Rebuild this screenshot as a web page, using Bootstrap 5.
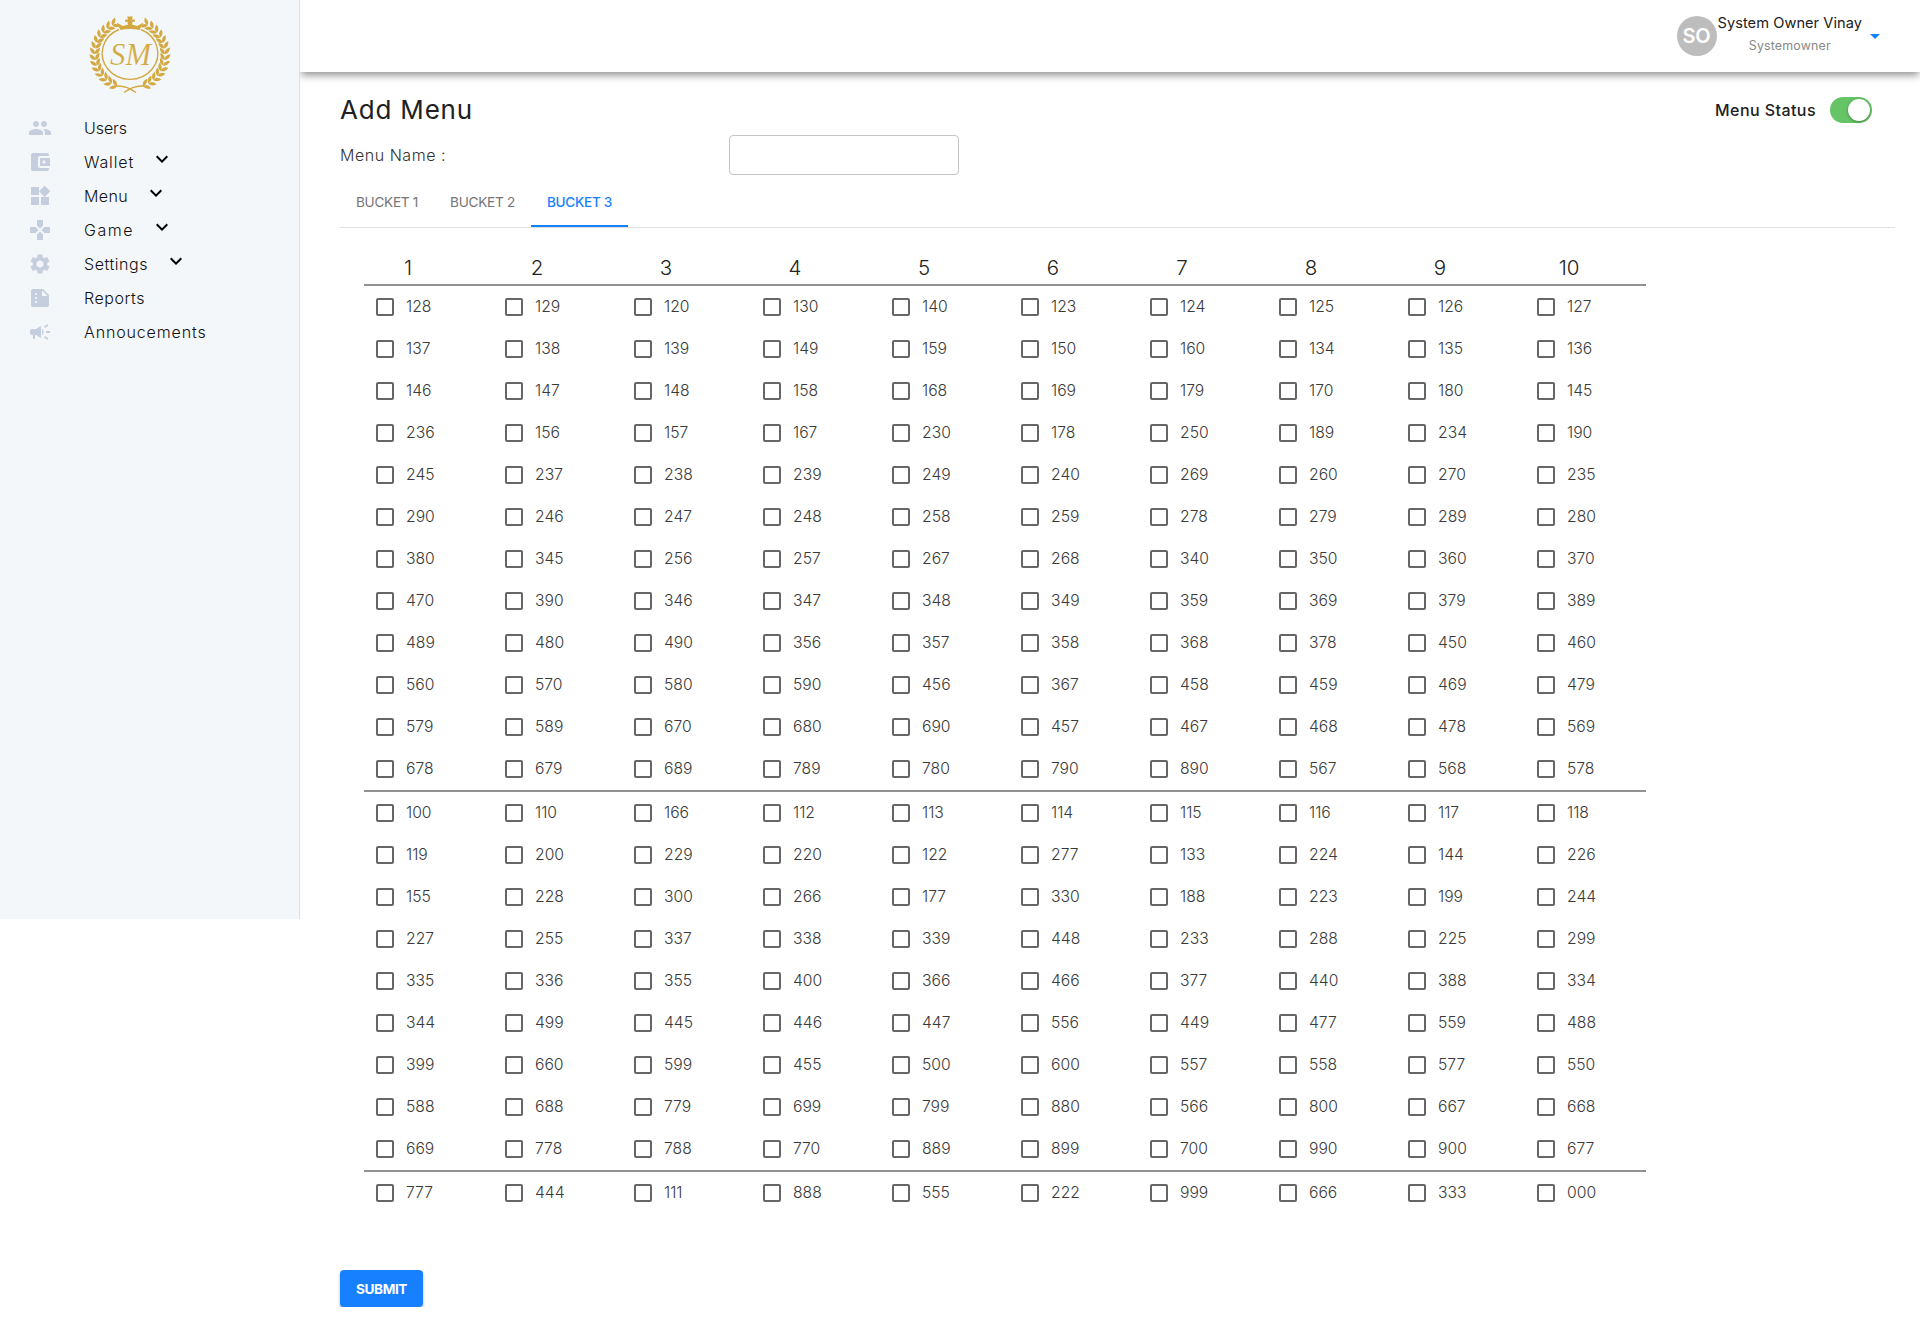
<!DOCTYPE html>
<html lang="en">
<head>
<meta charset="utf-8">
<meta name="viewport" content="width=device-width, initial-scale=1">
<title>Add Menu</title>
<link href="https://cdn.jsdelivr.net/npm/bootstrap@5.3.0/dist/css/bootstrap.min.css" rel="stylesheet">
<style>
body{font-family:Inter,"Open Sans",sans-serif;font-weight:300;font-size:16px;line-height:24px;color:#212121;background:#fff;overflow:hidden}
.side-panel{width:300px;height:919px;background:#f3f7fa;border-right:1px solid #dcdfe2}
.brand-mark{display:block;margin:11px 0 0 85px}
.side-nav{padding-top:10px}
.side-link{height:34px;padding-left:28px;color:#111}
.side-link .glyph{fill:#c5cedd;margin-right:32px}
.side-link .chev{margin-left:16px;margin-top:-7px;fill:#000}
.side-link span{font-size:16px}
.top-bar{height:72px;box-shadow:0 4px 8px -1px rgba(0,0,0,.45);padding-right:40px}
.avatar-disc{width:40px;height:40px;background:#bdbdbd;color:#fff;font-size:20px;font-weight:600;margin-right:1px}
.user-block{margin-top:-4px}
.user-name{font-size:14.6px;line-height:21px;font-weight:400}
.user-role{font-size:12.400px;line-height:18px;color:#888;font-weight:400;margin-top:3px}
.caret{border:5px solid transparent;border-top-color:#1780ff;border-bottom:0;margin-left:8px;margin-top:1px}
.page-body{padding:20px 25px 0 40px}
.page-title{font-size:26px;font-weight:400;line-height:36px}
.status-text{font-size:16px;font-weight:500}
.toggle{width:42px;height:26px;border-radius:13px;background:#65c466;padding:2px;margin:0 23px 0 14px}
.toggle i{width:22px;height:22px;box-shadow:0 1px 3px rgba(0,0,0,.35)}
.name-row{height:40px;margin-top:7px}
.name-label{width:389px;font-size:16px;color:#333}
.name-field{width:230px;height:40px;border:1px solid #c4c4c4;border-radius:4px}
.bucket-tabs{margin-top:4px;height:49px;border-bottom:1px solid #e0e0e0}
.bucket-tab{height:48px;padding:0 16px;font-size:13.6px;font-weight:400;color:#757575;border-bottom:2px solid transparent}
.bucket-tab.on{color:#1780ff;border-color:#1780ff;font-weight:500}
.picks{margin:26px 0 0 24px;width:1282px}
.picks-row.ruled{border-bottom:2px solid #919191}
.pick{width:129px;height:42px;flex:none;padding-left:12px;color:#3a3a3a;font-size:15.7px}
.pick .box{width:18px;height:18px;border:2px solid #666;border-radius:2px;margin-right:12px}
.head{height:30px;padding-top:2px;width:129px;flex:none;padding-right:41px;font-size:20.5px;color:#222}
.submit-btn{width:83px;height:37px;margin-top:56px;background:#1780ff;border-radius:4px;color:#fff;font-size:13.6px;font-weight:700;box-shadow:0 2px 3px rgba(0,0,0,.3)}
</style>
<script src="https://cdn.jsdelivr.net/npm/bootstrap@5.3.0/dist/js/bootstrap.bundle.min.js"></script>
</head>
<body>
<div class="d-flex align-items-start">
<aside class="side-panel flex-shrink-0 position-relative z-1">
<svg class="brand-mark" width="90" height="90" viewBox="85 11 90 90" fill="#d3a941">
<g id="laurel"></g>
<path d="M119 29.5A27.8 26 0 1 0 141 29.5" fill="none" stroke="#d3a941" stroke-width="1.4"/>
<path d="M120.500 30l-4-7.500 6.500 3.500 5-1.500-.5-2.700-2.300.2v-2.500h2.800l-.8-3h5.600l-.8 3h2.800v2.500l-2.300-.2-.5 2.700 5 1.500 6.500-3.500-4 7.500c-6-1.500-13-1.500-19 0z"/>
<text x="110" y="64.500" font-family="Liberation Serif,serif" font-style="italic" font-size="31" textLength="41" lengthAdjust="spacingAndGlyphs" stroke="#f3f7fa" stroke-width=".2">SM</text>
</svg>
<nav class="side-nav d-flex flex-column" id="nav"></nav>
</aside>
<div class="flex-grow-1">
<header class="top-bar d-flex align-items-center justify-content-end">
<div class="avatar-disc rounded-circle d-flex align-items-center justify-content-center"><span data-w="28">SO</span></div>
<div class="user-block text-center"><div class="user-name"><span data-w="144.500">System Owner Vinay</span></div><div class="user-role"><span data-w="82">Systemowner</span></div></div>
<i class="caret"></i>
</header>
<main class="page-body">
<div class="d-flex align-items-center justify-content-between"><h1 class="page-title m-0"><span data-w="133">Add Menu</span></h1>
<div class="d-flex align-items-center"><span class="status-text" data-w="101">Menu Status</span><div class="toggle d-flex justify-content-end"><i class="rounded-circle bg-white"></i></div></div></div>
<div class="name-row d-flex align-items-center"><label class="name-label" for="mname"><span data-w="106">Menu Name :</span></label><input id="mname" class="name-field"></div>
<div class="bucket-tabs d-flex"><div class="bucket-tab d-flex align-items-center"><span data-w="62">BUCKET 1</span></div><div class="bucket-tab d-flex align-items-center"><span data-w="65">BUCKET 2</span></div><div class="bucket-tab on d-flex align-items-center"><span data-w="65">BUCKET 3</span></div></div>
<div class="picks" id="picks"></div>
<button class="submit-btn border-0 p-0"><span data-w="51">SUBMIT</span></button>
</main>
</div>
</div>
<script>
const chev='<svg class="chev" width="24" height="24" viewBox="0 0 24 24"><path d="M7.410 8.590L12 13.170l4.590-4.580L18 10l-6 6-6-6z"/></svg>';
const dot=y=>`M8 ${y}c-.55 0-1-.45-1-1s.45-1 1-1 1 .45 1 1-.45 1-1 1z`;
const links=[
['Users',0,43,'M16 11c1.660 0 2.990-1.340 2.990-3S17.660 5 16 5s-3 1.340-3 3 1.340 3 3 3zm-8 0c1.660 0 2.990-1.340 2.990-3S9.660 5 8 5 5 6.340 5 8s1.340 3 3 3zm0 2c-2.330 0-7 1.170-7 3.500V19h14v-2.500c0-2.330-4.670-3.500-7-3.500zm8 0c-.29 0-.62.020-.97.050 1.160.84 1.970 1.970 1.970 3.450V19h6v-2.500c0-2.330-4.670-3.500-7-3.500z'],
['Wallet',1,50,'M21 18v1c0 1.100-.9 2-2 2H5c-1.110 0-2-.9-2-2V5c0-1.100.89-2 2-2h14c1.100 0 2 .9 2 2v1h-9c-1.110 0-2 .9-2 2v8c0 1.100.89 2 2 2h9zm-9-2h10V8H12v8zm4-2.500c-.83 0-1.500-.67-1.500-1.500s.67-1.500 1.500-1.500 1.500.67 1.500 1.500-.67 1.500-1.500 1.500z'],
['Menu',1,44,'M13 13v8h8v-8h-8zM3 21h8v-8H3v8zM3 3v8h8V3H3zm13.660-1.310L11 7.340 16.660 13l5.660-5.660-5.660-5.650z'],
['Game',1,50,'M15 7.500V2H9v5.500l3 3 3-3zM7.500 9H2v6h5.500l3-3-3-3zM9 16.500V22h6v-5.500l-3-3-3 3zM16.500 9l-3 3 3 3H22V9h-5.500z'],
['Settings',1,64,'M19.140 12.940c.04-.3.060-.61.060-.94 0-.32-.02-.64-.07-.94l2.030-1.580c.18-.14.230-.41.120-.61l-1.920-3.320c-.12-.22-.37-.29-.59-.22l-2.390.96c-.5-.38-1.030-.7-1.620-.94l-.36-2.540c-.04-.24-.24-.41-.48-.41h-3.840c-.24 0-.43.170-.47.410l-.36 2.540c-.59.240-1.130.57-1.620.94l-2.390-.96c-.22-.08-.47 0-.59.220L2.740 8.870c-.12.210-.08.470.12.610l2.030 1.580c-.05.3-.09.630-.09.940s.02.640.070.940l-2.030 1.580c-.18.140-.23.410-.12.610l1.920 3.320c.12.220.37.290.59.220l2.390-.96c.5.380 1.030.7 1.620.94l.36 2.540c.05.240.24.410.48.410h3.840c.24 0 .44-.17.470-.41l.36-2.540c.59-.24 1.130-.56 1.620-.94l2.390.96c.22.080.47 0 .59-.22l1.920-3.320c.12-.22.070-.47-.12-.61l-2.010-1.580zM12 15.600c-1.980 0-3.600-1.620-3.600-3.600s1.620-3.600 3.600-3.600 3.600 1.620 3.600 3.600-1.620 3.600-3.600 3.600z'],
['Reports',0,61,'M15 3H5c-1.100 0-1.990.9-1.990 2L3 19c0 1.100.89 2 1.990 2H19c1.100 0 2-.9 2-2V9l-6-6z'+dot(17)+dot(13)+dot(9)+'M14 10V4.500l5.500 5.500H14z'],
['Annoucements',0,122.5,'M18 11v2h4v-2h-4zm-2 6.610c.96.71 2.210 1.650 3.200 2.390.4-.53.8-1.070 1.200-1.600-.99-.74-2.240-1.680-3.200-2.400-.4.540-.8 1.080-1.200 1.610zM20.400 5.600c-.4-.53-.8-1.070-1.200-1.600-.99.740-2.240 1.680-3.200 2.400.4.530.8 1.070 1.200 1.600.96-.72 2.210-1.650 3.200-2.400zM4 9c-1.100 0-2 .9-2 2v2c0 1.100.9 2 2 2h1v4h2v-4h1l5 3V6L8 9H4zm11.500 3c0-1.330-.58-2.530-1.500-3.350v6.690c.92-.81 1.500-2.010 1.500-3.340z']];
document.getElementById('nav').innerHTML=links.map(([t,c,w,d])=>`<div class="side-link d-flex align-items-center"><svg class="glyph" width="24" height="24" viewBox="0 0 24 24" fill-rule="evenodd"><path d="${d}"/></svg><span data-w="${w}">${t}</span>${c?chev:''}</div>`).join('');

const rows=`128 129 120 130 140 123 124 125 126 127
137 138 139 149 159 150 160 134 135 136
146 147 148 158 168 169 179 170 180 145
236 156 157 167 230 178 250 189 234 190
245 237 238 239 249 240 269 260 270 235
290 246 247 248 258 259 278 279 289 280
380 345 256 257 267 268 340 350 360 370
470 390 346 347 348 349 359 369 379 389
489 480 490 356 357 358 368 378 450 460
560 570 580 590 456 367 458 459 469 479
579 589 670 680 690 457 467 468 478 569
678 679 689 789 780 790 890 567 568 578
100 110 166 112 113 114 115 116 117 118
119 200 229 220 122 277 133 224 144 226
155 228 300 266 177 330 188 223 199 244
227 255 337 338 339 448 233 288 225 299
335 336 355 400 366 466 377 440 388 334
344 499 445 446 447 556 449 477 559 488
399 660 599 455 500 600 557 558 577 550
588 688 779 699 799 880 566 800 667 668
669 778 788 770 889 899 700 990 900 677
777 444 111 888 555 222 999 666 333 000`.split('\n').map(r=>r.split(' '));
let out='<div class="picks-row ruled d-flex">'+[1,2,3,4,5,6,7,8,9,10].map(n=>`<div class="head text-center">${n}</div>`).join('')+'</div>';
rows.forEach((r,i)=>{out+=`<div class="picks-row d-flex ${i==11||i==20?'ruled':''}">`+r.map(n=>`<label class="pick d-flex align-items-center"><i class="box"></i><span>${n}</span></label>`).join('')+'</div>'});
document.getElementById('picks').innerHTML=out;

// Laurel branches: leaf pairs along both sides of the ring
let leaves='';
for(const s of [-1,1]){
 for(let k=0;k<14;k++){
  const d=22+k*9.8,a=d*Math.PI/180,x=130+s*Math.sin(a)*35,y=54.5+Math.cos(a)*34;
  for(const q of [-1,1]) leaves+=`<path d="M0 0Q3.500-3.800 8.300 0Q3.500 3.200 0 0" transform="translate(${x.toFixed(1)} ${y.toFixed(1)}) rotate(${(-d*s+(s<0?180:0)+q*38).toFixed(0)})"/>`;
 }
 leaves+=`<path d="M${130-s*6} 92.500Q${130+s*4} 85 ${130+s*14} 86" fill="none" stroke="#d3a941" stroke-width="1.500"/>`;
}
document.getElementById('laurel').innerHTML=leaves;

// Tracking: spread each label over its nominal width
document.querySelectorAll('[data-w]').forEach(e=>{
 e.style.letterSpacing=((e.dataset.w-e.getBoundingClientRect().width)/e.textContent.length).toFixed(3)+'px';
});
</script>
</body>
</html>
